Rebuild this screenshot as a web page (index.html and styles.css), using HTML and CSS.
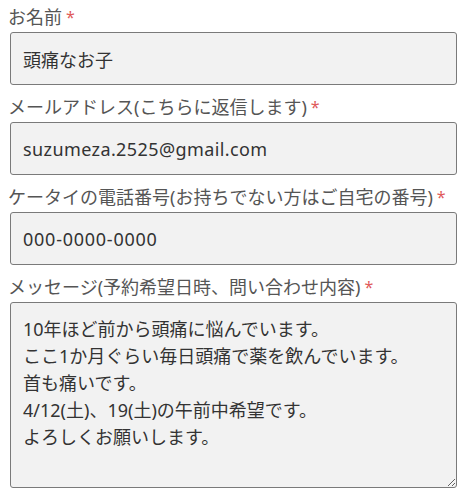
FILE: index.html
```html
<!DOCTYPE html>
<html lang="ja">
<head>
  <meta charset="UTF-8" />
  <meta name="viewport" content="width=device-width, initial-scale=1.0"/>
  <title>お問い合わせ</title>
  <link rel="stylesheet" href="styles.css">
</head>
<body>
  <form class="contact-form">
    <div class="field">
      <label for="name">お名前<span class="required">*</span></label>
      <input type="text" id="name" class="text-input" value="頭痛なお子">
    </div>
    <div class="field">
      <label for="email">メールアドレス(こちらに返信します)<span class="required">*</span></label>
      <input type="email" id="email" class="text-input email-input" value="suzumeza.2525@gmail.com">
    </div>
    <div class="field">
      <label for="tel">ケータイの電話番号(お持ちでない方はご自宅の番号)<span class="required">*</span></label>
      <input type="tel" id="tel" class="text-input tel-input" value="000-0000-0000">
    </div>
    <div class="field">
      <label for="message">メッセージ(予約希望日時、問い合わせ内容)<span class="required">*</span></label>
      <textarea id="message" class="text-area">10年ほど前から頭痛に悩んでいます。
ここ1か月ぐらい毎日頭痛で薬を飲んでいます。
首も痛いです。
4/12(土)、19(土)の午前中希望です。
よろしくお願いします。</textarea>
    </div>
  </form>
</body>
</html>
```

FILE: styles.css
```css
body {
  margin: 0;
  padding: 5px 12px 0 8px;
  background: #fff;
  font-family: "Noto Sans", "Noto Sans CJK JP", sans-serif;
}

.field {
  margin-bottom: 10px;
}

.field:nth-child(2),
.field:nth-child(4) {
  margin-top: 1px;
}

.field label {
  display: block;
  height: 24px;
  font-size: 18px;
  line-height: 24px;
  color: #555;
  margin-bottom: 3px;
  white-space: nowrap;
  overflow: hidden;
}

.required {
  color: #e05a5a;
  font-size: 16px;
  line-height: 1;
  margin-left: 4px;
  vertical-align: 1px;
}

.text-input,
.text-area {
  display: block;
  box-sizing: border-box;
  width: 447px;
  margin-left: 2px;
  border: 1px solid #7a7a7a;
  border-radius: 3px;
  background: #f2f2f2;
  color: #333;
  font-family: "Noto Sans", "Noto Sans CJK JP", sans-serif;
  font-size: 18px;
  padding: 0 12px;
  outline: none;
}

.text-input {
  height: 53px;
}

.email-input {
  letter-spacing: 0.4px;
}

.tel-input {
  letter-spacing: 0.75px;
}

.text-area {
  height: 186px;
  padding-top: 13px;
  line-height: 27px;
  resize: vertical;
}
```
